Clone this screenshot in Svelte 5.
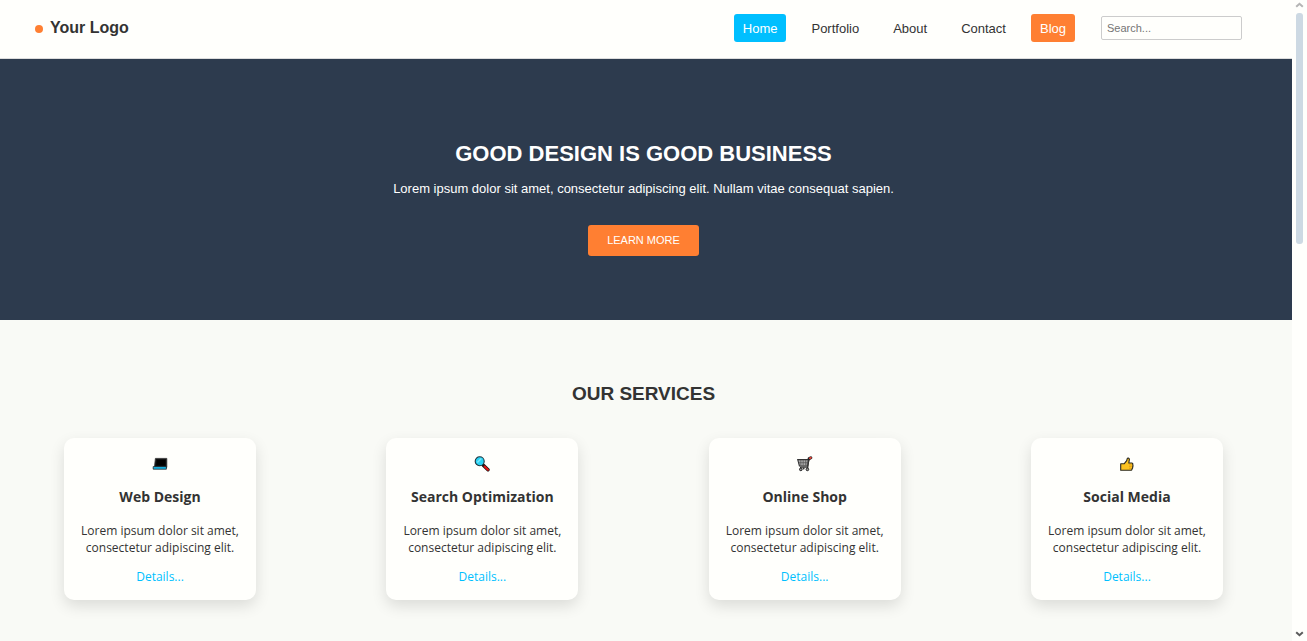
<script>
  const links = [
    { label: 'Home', kind: 'active' },
    { label: 'Portfolio', kind: '' },
    { label: 'About', kind: '' },
    { label: 'Contact', kind: '' },
    { label: 'Blog', kind: 'accent' }
  ];
  const services = [
    { title: 'Web Design', icon: 'laptop' },
    { title: 'Search Optimization', icon: 'lens' },
    { title: 'Online Shop', icon: 'cart' },
    { title: 'Social Media', icon: 'thumb' }
  ];
</script>

<div class="window">
  <div class="page">
    <header>
      <a class="logo" href="#home"><span class="dot"></span>Your Logo</a>
      <nav>
        {#each links as link}
          <a class={link.kind} href={'#' + link.label.toLowerCase()}>{link.label}</a>
        {/each}
      </nav>
      <input type="search" placeholder="Search..." aria-label="Search" />
    </header>

    <section class="hero">
      <h1>GOOD DESIGN IS GOOD BUSINESS</h1>
      <p>Lorem ipsum dolor sit amet, consectetur adipiscing elit. Nullam vitae consequat sapien.</p>
      <button type="button">LEARN MORE</button>
    </section>

    <section class="services">
      <h2>OUR SERVICES</h2>
      <div class="cards">
        {#each services as service}
          <article>
            <svg viewBox="0 0 16 16" aria-hidden="true">
              {#if service.icon === 'laptop'}
                <path d="M3.4 2.4h11.4v9H2.4z" fill="#111" stroke="#333" stroke-width=".8" />
                <path d="M4.8 4h8.6v5.6H4.2z" fill="#000" />
                <path d="M1.2 10.6h13.2v2.6H1.2z" fill="#16b9ed" stroke="#222" stroke-width=".8" />
              {:else if service.icon === 'lens'}
                <path d="M9.3 9.2l4.7 4.6" stroke="#171717" stroke-width="3.4" stroke-linecap="round" />
                <path d="M10.6 10.5l3.4 3.3" stroke="#e81212" stroke-width="1.9" stroke-linecap="round" />
                <circle cx="5.7" cy="5.3" r="4.5" fill="#28d3f5" stroke="#20343c" stroke-width="1.1" />
                <path d="M3.3 6.5l4-4" stroke="#7ce8fb" stroke-width="1.4" />
              {:else if service.icon === 'cart'}
                <path d="M.7 3.6h11.2l-1.2 6.4H2.4z" fill="#aaa" stroke="#333" stroke-width="1.1" />
                <path d="M3.8 4v5.5M6.2 4v5.5M8.6 4v5.5M10.5 4L10 9.5M2 6.7h9" stroke="#555" stroke-width=".7" />
                <path d="M13.6 1.9l-1.7 1.3-1.2 7.9H3.2" fill="none" stroke="#333" stroke-width="1.3" />
                <path d="M12.2 2.6l1.6-.9" stroke="#222" stroke-width="3" stroke-linecap="round" />
                <path d="M12.9 2.3l.9-.6" stroke="#e94438" stroke-width="1.8" stroke-linecap="round" />
                <path d="M3.6 11v1.8M10.6 11v1.8" stroke="#333" stroke-width="1.2" />
                <circle cx="3.8" cy="13.4" r="1.3" fill="#999" stroke="#222" stroke-width="1" />
                <circle cx="6.6" cy="12.6" r="1" fill="#333" />
                <circle cx="10.4" cy="13.4" r="1.3" fill="#999" stroke="#222" stroke-width="1" />
              {:else}
                <path
                  d="M1.7 7.8h3.4l2.6-3.1.5-2c.4-1.1 2.2-.7 2.2.7l-.6 3.6h2.9c1.1 0 1.6 1.1.9 1.9.7.6.6 1.5-.1 2 .5.7.2 1.5-.5 1.8.2 1-.4 1.6-1.4 1.6H1.7z"
                  fill="#fcc21f" stroke="#2a2820" stroke-width="1.1" stroke-linejoin="round" />
                <path d="M10 8.8h2.8M10 10.6h2.6M10 12.3h2" stroke="#d58b0a" stroke-width=".6" />
              {/if}
            </svg>
            <h3>{service.title}</h3>
            <p>Lorem ipsum dolor sit amet, consectetur adipiscing elit.</p>
            <a href="#details">Details...</a>
          </article>
        {/each}
      </div>
    </section>
  </div>

  <div class="scrollbar" aria-hidden="true">
    <svg viewBox="0 0 9 6"><path d="M1.2 4.8l3.3-3 3.3 3" fill="none" stroke="#b5b5b5" stroke-width="2" /></svg>
    <div class="thumb"></div>
    <svg class="down" viewBox="0 0 9 6"><path d="M1.2 1.2l3.3 3 3.3-3" fill="none" stroke="#5c5c5c" stroke-width="2" /></svg>
  </div>
</div>

<style>
  :global(body) {
    margin: 0;
    background: #fffffc;
  }
  .window {
    display: flex;
    min-height: 100vh;
    color: #333;
    font-family: 'Liberation Sans', Arial, sans-serif;
    font-size: 13px;
  }
  .page {
    flex: 1;
    display: flex;
    flex-direction: column;
  }
  a {
    text-decoration: none;
  }
  header {
    display: flex;
    align-items: center;
    box-sizing: border-box;
    height: 59px;
    padding: 0 50px 3px 35px;
    border-bottom: 1px solid #ddd;
    background: #fffffc;
  }
  .logo {
    display: flex;
    align-items: center;
    gap: 7px;
    margin-right: auto;
    color: #333;
    font-size: 16px;
    font-weight: bold;
  }
  .dot {
    width: 8px;
    height: 8px;
    margin-top: 2px;
    border-radius: 50%;
    background: #ff7f32;
  }
  nav {
    display: flex;
    gap: 16px;
    margin-right: 26px;
  }
  nav a {
    padding: 1px 9px 0;
    border-radius: 3px;
    color: #333;
    line-height: 27px;
  }
  nav .active {
    background: #00bfff;
    color: #fff;
  }
  nav .accent {
    background: #ff7f32;
    color: #fff;
  }
  input {
    box-sizing: border-box;
    width: 141px;
    height: 24px;
    padding: 0 5px;
    border: 1px solid #ccc;
    border-radius: 2px;
    background: #fffffc;
    font: 11px 'Liberation Sans', Arial, sans-serif;
    appearance: none;
  }
  input::placeholder {
    color: #757575;
  }
  .hero {
    display: flex;
    flex-direction: column;
    align-items: center;
    padding: 80px 5px 64px 0;
    background: #2d3b4e;
    color: #fff;
    text-align: center;
  }
  h1 {
    margin: 0 0 12px;
    font-size: 22px;
    line-height: 30px;
  }
  .hero p {
    margin: 0 0 28px;
    line-height: 16px;
  }
  button {
    padding: 0 19px;
    border: 0;
    border-radius: 3px;
    background: #ff7f32;
    color: #fff;
    font: 11px/31px 'Liberation Sans', Arial, sans-serif;
  }
  .services {
    flex: 1;
    padding: 60px 69px 40px 64px;
    background: #f9faf6;
  }
  h2 {
    margin: 0 0 30px;
    font-size: 19px;
    line-height: 28px;
    text-align: center;
  }
  .cards {
    display: flex;
    justify-content: space-between;
  }
  article {
    display: flex;
    flex-direction: column;
    align-items: center;
    box-sizing: border-box;
    width: 192px;
    padding: 18px 8px 15px;
    border-radius: 10px;
    background: #fffffc;
    box-shadow: 0 6px 15px rgba(0, 0, 0, 0.12);
    font-family: 'Segoe UI', 'Open Sans', sans-serif;
    text-align: center;
  }
  article svg {
    width: 16px;
    height: 16px;
  }
  h3 {
    margin: 15px 0 13px;
    font-size: 14px;
    line-height: 20px;
  }
  article p {
    margin: 2px 0 12px;
    font-size: 12px;
    line-height: 17px;
  }
  article a {
    color: #00bfff;
    font-size: 12px;
    line-height: 17px;
  }
  .scrollbar {
    display: flex;
    flex-direction: column;
    align-items: center;
    box-sizing: border-box;
    width: 15px;
    padding: 2px 0 4px;
    background: #fffffc;
  }
  .scrollbar svg {
    width: 9px;
    height: 6px;
  }
  .thumb {
    width: 7px;
    height: 36vh;
    margin-top: 5px;
    border-radius: 3px;
    background: #cdd9e3;
  }
  .scrollbar .down {
    margin-top: auto;
  }
</style>
